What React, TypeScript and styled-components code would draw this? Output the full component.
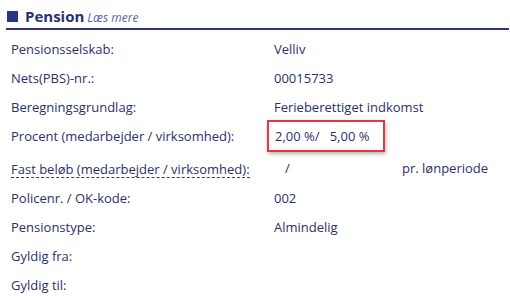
import React from "react";
import styled, { createGlobalStyle } from "styled-components";

const Global = createGlobalStyle`
  html, body { margin: 0; padding: 0; background: #fff; }
  body { font-family: "Open Sans", "Noto Sans", sans-serif; color: #2c3068; }
`;

const Section = styled.section`
  width: 510px;
  padding: 6px 1px 0 6px;
  box-sizing: border-box;
`;

const Header = styled.header`
  display: flex;
  align-items: center;
  gap: 7px;
  height: 22px;
  border-bottom: 2px solid #2e3575;
`;

const Square = styled.span`
  width: 11px;
  height: 11px;
  background: #2a348a;
  margin-left: 1px;
  margin-bottom: 2px;
`;

const Title = styled.h2`
  margin: 0;
  font-size: 15px;
  font-weight: 700;
  color: #243078;
  line-height: 20px;
  margin-bottom: 2px;
`;

const ReadMore = styled.a`
  font-size: 12px;
  font-style: italic;
  color: #5a62a8;
  margin-left: -4px;
  margin-top: 1px;
`;

const List = styled.div`
  display: flex;
  flex-direction: column;
  padding: 4px 0 0 5px;
`;

const Row = styled.div<{ $height?: number }>`
  display: grid;
  grid-template-columns: 263px 1fr;
  align-items: center;
  height: ${(p) => p.$height ?? 29}px;
  font-size: 13px;
`;

const Label = styled.span<{ $hint?: boolean; $shift?: number }>`
  margin-top: ${(p) => p.$shift ?? 0}px;
  ${(p) =>
    p.$hint &&
    `
    border-bottom: 1px dashed #2c3590;
    justify-self: start;
    line-height: 16px;
    padding-top: 2px;
  `}
`;

const Highlight = styled.span`
  justify-self: start;
  margin-left: -7px;
  margin-top: -3px;
  padding: 5px 14px 5px 6px;
  line-height: 18px;
  border: 2px solid #e8373c;
  box-shadow: 1px 2px 4px rgba(0, 0, 0, 0.3);
  white-space: pre;
`;

const Split = styled.div`
  display: grid;
  grid-template-columns: 128px 1fr;
`;

const Slash = styled.span`
  padding-left: 11px;
`;

export default function App() {
  return (
    <>
      <Global />
      <Section>
        <Header>
          <Square />
          <Title>Pension</Title>
          <ReadMore>Læs mere</ReadMore>
        </Header>
        <List>
          <Row>
            <Label>Pensionsselskab:</Label>
            <span>Velliv</span>
          </Row>
          <Row>
            <Label>Nets(PBS)-nr.:</Label>
            <span>00015733</span>
          </Row>
          <Row>
            <Label>Beregningsgrundlag:</Label>
            <span>Ferieberettiget indkomst</span>
          </Row>
          <Row $height={32}>
            <Label $shift={-3}>Procent (medarbejder / virksomhed):</Label>
            <Highlight>{"2,00 %/   5,00 %"}</Highlight>
          </Row>
          <Row $height={30}>
            <Label $hint>Fast beløb (medarbejder / virksomhed):</Label>
            <Split>
              <Slash>/</Slash>
              <span>pr. lønperiode</span>
            </Split>
          </Row>
          <Row>
            <Label>Policenr. / OK-kode:</Label>
            <span>002</span>
          </Row>
          <Row>
            <Label>Pensionstype:</Label>
            <span>Almindelig</span>
          </Row>
          <Row>
            <Label>Gyldig fra:</Label>
            <span></span>
          </Row>
          <Row>
            <Label>Gyldig til:</Label>
            <span></span>
          </Row>
        </List>
      </Section>
    </>
  );
}
